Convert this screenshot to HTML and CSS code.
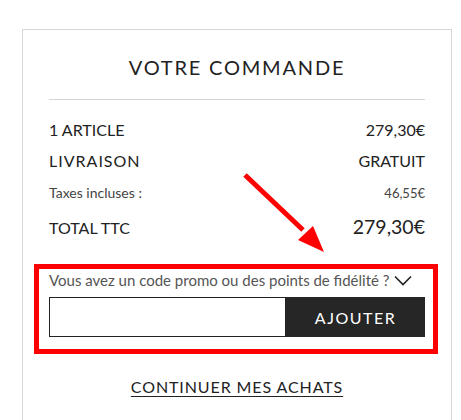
FILE: index.html
```html
<!doctype html>
<html lang="fr">
<head>
	<meta charset="UTF-8">
	<title>Votre commande</title>
	<link rel="stylesheet" href="styles.css">
</head>
<body>
	<div id="frame">
		<div class="heading">VOTRE COMMANDE</div>
		<hr>
		<div class="row">
			<span>1 ARTICLE</span>
			<span>279,30€</span>
		</div>
		<div class="row">
			<span class="spaced">LIVRAISON</span>
			<span>GRATUIT</span>
		</div>
		<div class="row small">
			<span class="label">Taxes incluses :</span>
			<span>46,55€</span>
		</div>
		<div class="row total">
			<span>TOTAL TTC</span>
			<span class="big">279,30€</span>
		</div>

		<div class="promo">
			<div class="promo-title">
				<span>Vous avez un code promo ou des points de fidélité ?</span>
				<svg width="18" height="11" viewBox="0 0 18 11"><path d="M1 1.5 L9 9.5 L17 1.5" fill="none" stroke="#222" stroke-width="1.6"/></svg>
			</div>
			<form class="promo-form" action="#" method="POST">
				<input type="text" name="code" value="">
				<button type="button">AJOUTER</button>
			</form>
		</div>

		<div class="continuer">
			<a href="#">CONTINUER MES ACHATS</a>
		</div>
	</div>

	<!-- annotation -->
	<div class="marque"></div>
	<svg class="fleche" width="90" height="90" viewBox="0 0 90 90">
		<line x1="4" y1="4" x2="62" y2="59" stroke="#ff0000" stroke-width="5"/>
		<polygon points="83,81 57,69 72,55" fill="#ff0000"/>
	</svg>
</body>
</html>
```

FILE: styles.css
```css
body {
  margin:0;
  font-family:"Lato", "Open Sans", sans-serif;
  color:#222;
  background:#fff;
  overflow:hidden;
}

#frame {
  margin:29px 0 0 22px;
  width:376px;
  height:391px;
  padding:0 26px;
  border:1px solid #d6d6d6;
  border-bottom:none;
}

div.heading {
  font-size:20px;
  letter-spacing:1.8px;
  text-align:center;
  padding-top:25px;
  line-height:24px;
}

hr {
  border:none;
  border-top:1px solid #d6d6d6;
  margin:20px 0 14px 0;
}

div.row {
  display:flex;
  justify-content:space-between;
  align-items:baseline;
  font-size:16px;
  line-height:31px;
}

.spaced {
  letter-spacing:1px;
}

div.small {
  font-size:13px;
  color:#444;
  line-height:33px;
}

.label {
  font-size:14px;
}

div.total {
  line-height:33px;
}

.big {
  font-size:19.5px;
}

div.promo {
  margin-top:26px;
}

div.promo-title {
  display:flex;
  justify-content:space-between;
  align-items:center;
  font-size:15px;
  color:#555;
  padding-right:13px;
  line-height:20px;
}

form.promo-form {
  display:flex;
  margin-top:7px;
}

form.promo-form input {
  width:237px;
  height:40px;
  box-sizing:border-box;
  border:1px solid #222;
  margin:0;
  padding:0 8px;
}

form.promo-form button {
  flex:1;
  height:40px;
  border:none;
  background:#262626;
  color:#fff;
  font-family:inherit;
  font-size:16px;
  letter-spacing:1.5px;
  margin:0;
}

div.continuer {
  text-align:center;
  margin-top:40px;
}

div.continuer a {
  color:#222;
  font-size:16px;
  letter-spacing:0.9px;
  text-underline-offset:3px;
}

.marque {
  position:absolute;
  left:34px;
  top:264px;
  width:394px;
  height:80px;
  border:5px solid #ff0000;
}

.fleche {
  position:absolute;
  left:241px;
  top:171px;
}
```
